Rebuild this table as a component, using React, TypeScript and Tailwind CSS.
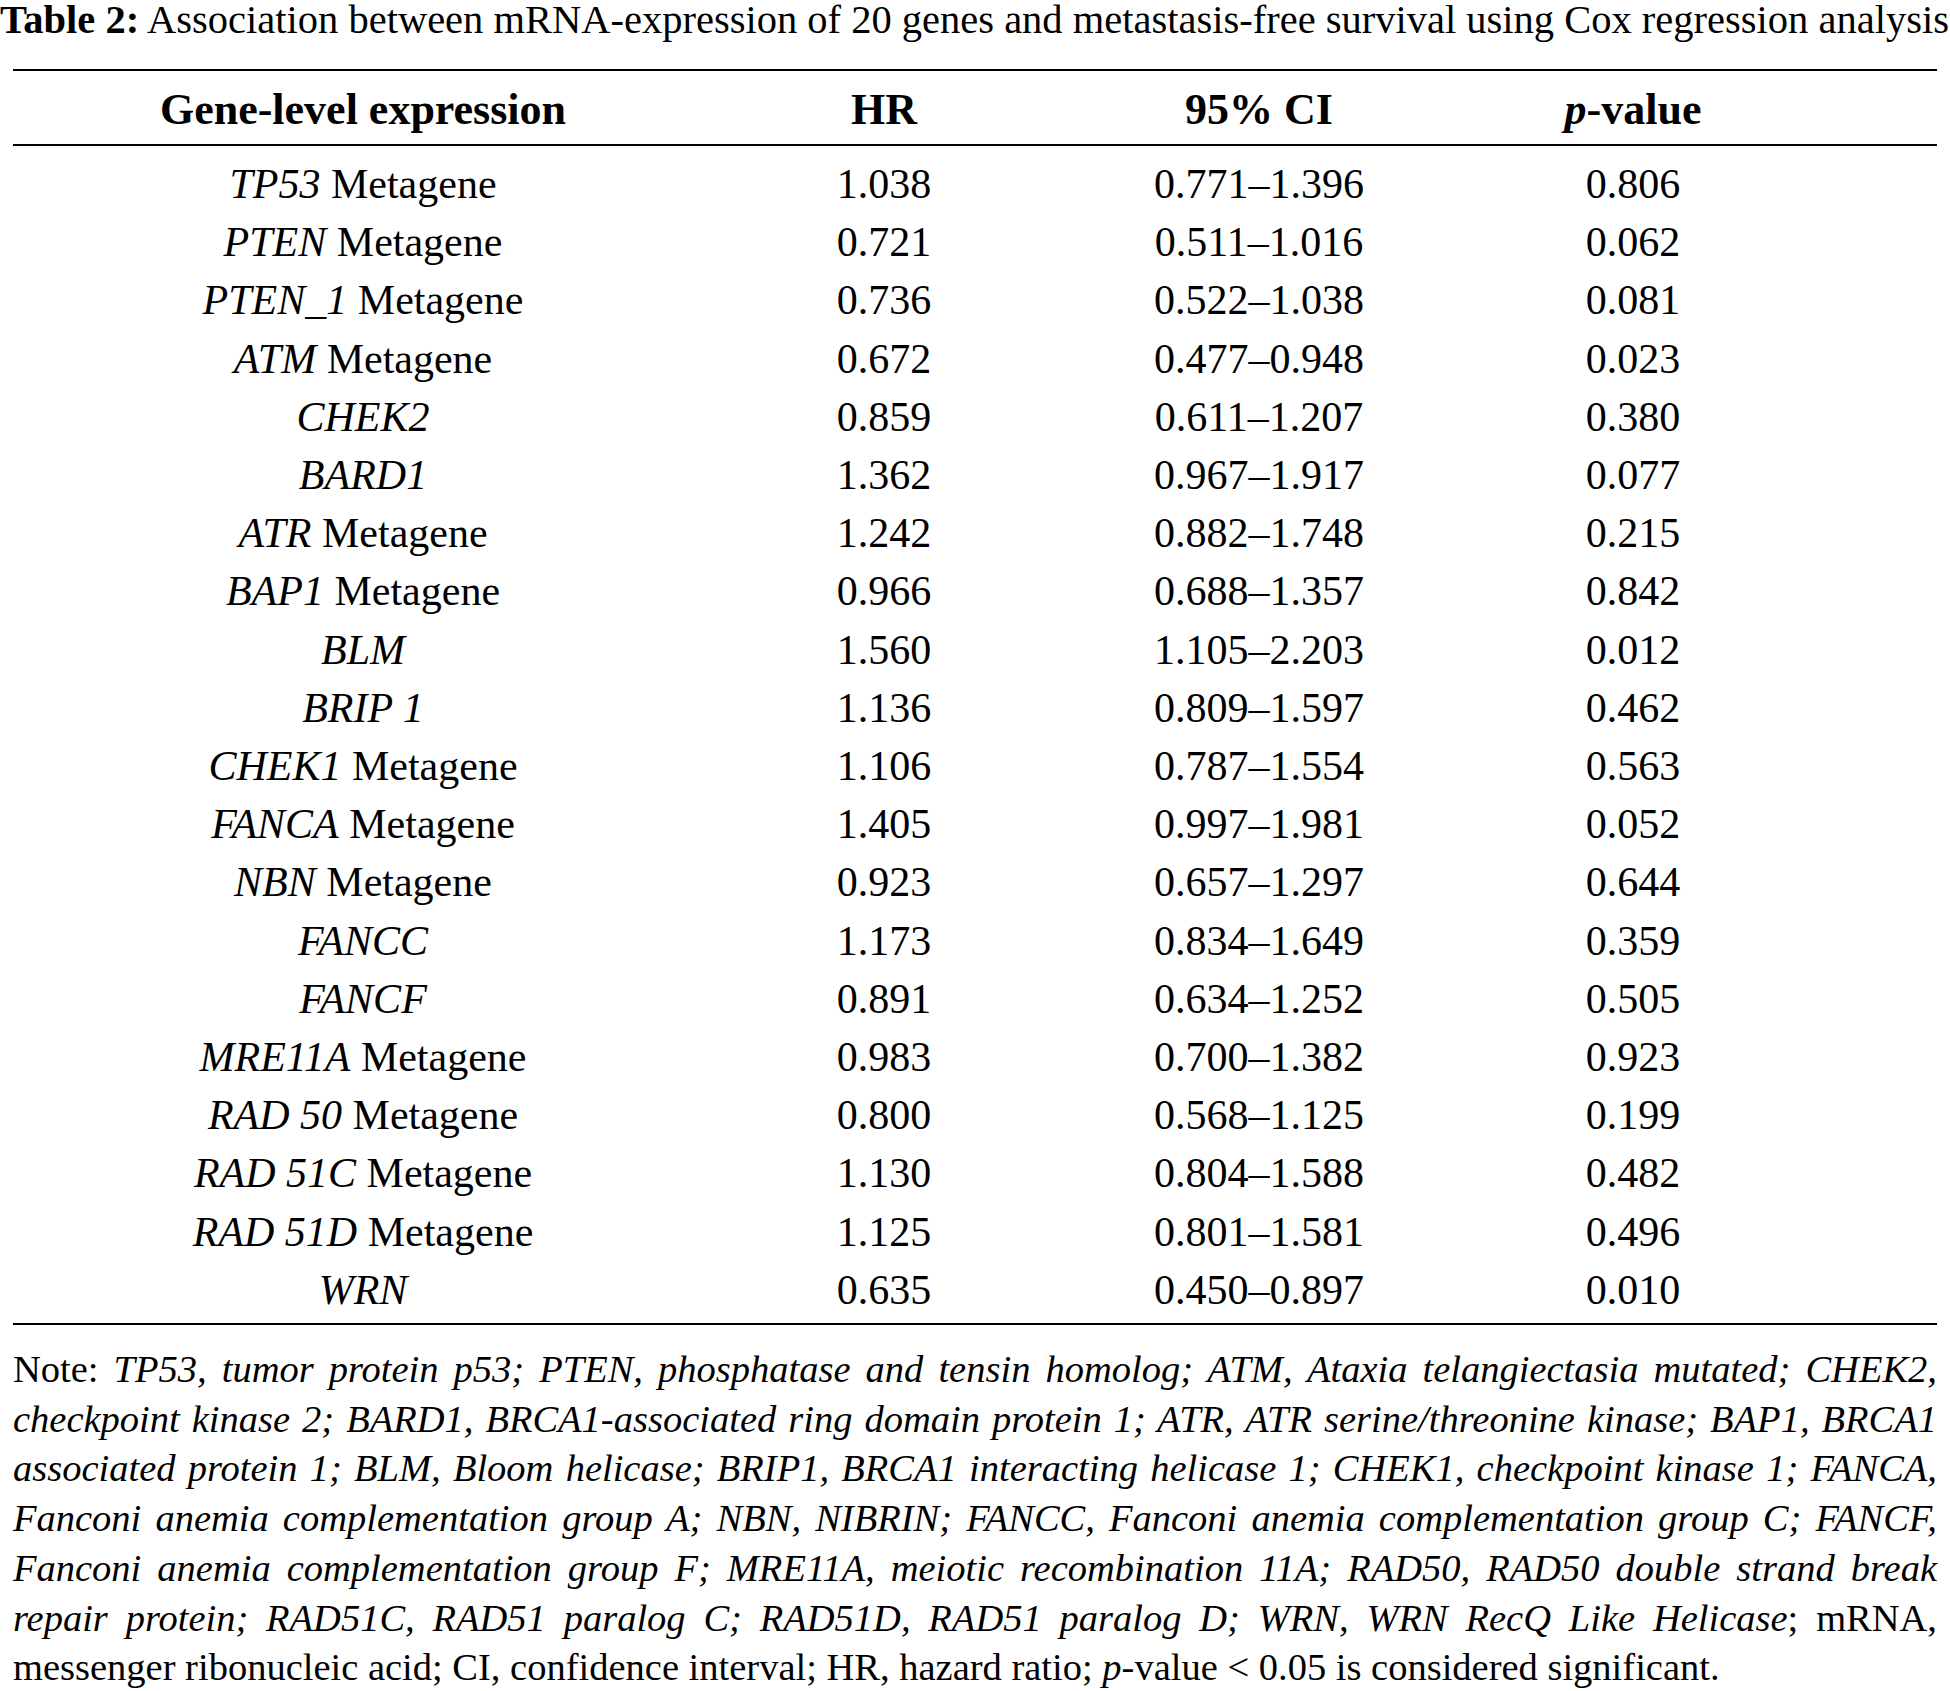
import React from "react";

type Row = { gene: React.ReactNode; hr: string; ci: string; p: string };

const I = ({ children }: { children: React.ReactNode }) => <i className="italic">{children}</i>;

const rows: Row[] = [
  { gene: <><I>TP53</I> Metagene</>, hr: "1.038", ci: "0.771–1.396", p: "0.806" },
  { gene: <><I>PTEN</I> Metagene</>, hr: "0.721", ci: "0.511–1.016", p: "0.062" },
  { gene: <><I>PTEN_1</I> Metagene</>, hr: "0.736", ci: "0.522–1.038", p: "0.081" },
  { gene: <><I>ATM</I> Metagene</>, hr: "0.672", ci: "0.477–0.948", p: "0.023" },
  { gene: <I>CHEK2</I>, hr: "0.859", ci: "0.611–1.207", p: "0.380" },
  { gene: <I>BARD1</I>, hr: "1.362", ci: "0.967–1.917", p: "0.077" },
  { gene: <><I>ATR</I> Metagene</>, hr: "1.242", ci: "0.882–1.748", p: "0.215" },
  { gene: <><I>BAP1</I> Metagene</>, hr: "0.966", ci: "0.688–1.357", p: "0.842" },
  { gene: <I>BLM</I>, hr: "1.560", ci: "1.105–2.203", p: "0.012" },
  { gene: <I>BRIP 1</I>, hr: "1.136", ci: "0.809–1.597", p: "0.462" },
  { gene: <><I>CHEK1</I> Metagene</>, hr: "1.106", ci: "0.787–1.554", p: "0.563" },
  { gene: <><I>FANCA</I> Metagene</>, hr: "1.405", ci: "0.997–1.981", p: "0.052" },
  { gene: <><I>NBN</I> Metagene</>, hr: "0.923", ci: "0.657–1.297", p: "0.644" },
  { gene: <I>FANCC</I>, hr: "1.173", ci: "0.834–1.649", p: "0.359" },
  { gene: <I>FANCF</I>, hr: "0.891", ci: "0.634–1.252", p: "0.505" },
  { gene: <><I>MRE11A</I> Metagene</>, hr: "0.983", ci: "0.700–1.382", p: "0.923" },
  { gene: <><I>RAD 50</I> Metagene</>, hr: "0.800", ci: "0.568–1.125", p: "0.199" },
  { gene: <><I>RAD 51C</I> Metagene</>, hr: "1.130", ci: "0.804–1.588", p: "0.482" },
  { gene: <><I>RAD 51D</I> Metagene</>, hr: "1.125", ci: "0.801–1.581", p: "0.496" },
  { gene: <I>WRN</I>, hr: "0.635", ci: "0.450–0.897", p: "0.010" },
];

const grid = "grid grid-cols-[700px_342px_408px_340px_1fr] text-center";

function NoteLine({ children, last }: { children: React.ReactNode; last?: boolean }) {
  return (
    <div
      className={
        last
          ? "text-left leading-[49.7px]"
          : "text-justify [text-align-last:justify] leading-[49.7px]"
      }
    >
      {children}
    </div>
  );
}

export default function App() {
  return (
    <div
      className="w-[1950px] min-h-[1691px] bg-white text-black overflow-hidden"
      style={{ fontFamily: '"Liberation Serif", "Times New Roman", serif' }}
    >
      <div className="whitespace-nowrap pt-[2px] text-[40.5px] leading-[36px]">
        <b className="font-bold">Table 2:</b> Association between mRNA-expression of 20 genes and metastasis-free survival using Cox regression analysis
      </div>

      <div className="mx-[13px] mt-[31px]">
        <div className="h-[2px] bg-black" />
        <div className={`${grid} h-[73px] pt-[5px] text-[44px] font-bold leading-[68px]`}>
          <div>Gene-level expression</div>
          <div>HR</div>
          <div>95% CI</div>
          <div>
            <i className="italic">p</i>-value
          </div>
          <div />
        </div>
        <div className="h-[2px] bg-black" />
        <div className="pt-[9px] pb-[4px] text-[42px] leading-[58.2px]">
          {rows.map((r, i) => (
            <div key={i} className={grid}>
              <div className="whitespace-nowrap">{r.gene}</div>
              <div>{r.hr}</div>
              <div>{r.ci}</div>
              <div>{r.p}</div>
              <div />
            </div>
          ))}
        </div>
        <div className="h-[2px] bg-black" />

        <div className="mt-[20px] text-[38.5px]">
          <NoteLine>
            Note: <I>TP53, tumor protein p53; PTEN, phosphatase and tensin homolog; ATM, Ataxia telangiectasia mutated; CHEK2,</I>
          </NoteLine>
          <NoteLine>
            <I>checkpoint kinase 2; BARD1, BRCA1-associated ring domain protein 1; ATR, ATR serine/threonine kinase; BAP1, BRCA1</I>
          </NoteLine>
          <NoteLine>
            <I>associated protein 1; BLM, Bloom helicase; BRIP1, BRCA1 interacting helicase 1; CHEK1, checkpoint kinase 1; FANCA,</I>
          </NoteLine>
          <NoteLine>
            <I>Fanconi anemia complementation group A; NBN, NIBRIN; FANCC, Fanconi anemia complementation group C; FANCF,</I>
          </NoteLine>
          <NoteLine>
            <I>Fanconi anemia complementation group F; MRE11A, meiotic recombination 11A; RAD50, RAD50 double strand break</I>
          </NoteLine>
          <NoteLine>
            <I>repair protein; RAD51C, RAD51 paralog C; RAD51D, RAD51 paralog D; WRN, WRN RecQ Like Helicase</I>; mRNA,
          </NoteLine>
          <NoteLine last>
            messenger ribonucleic acid; CI, confidence interval; HR, hazard ratio; <I>p</I>-value &lt; 0.05 is considered significant.
          </NoteLine>
        </div>
      </div>
    </div>
  );
}
